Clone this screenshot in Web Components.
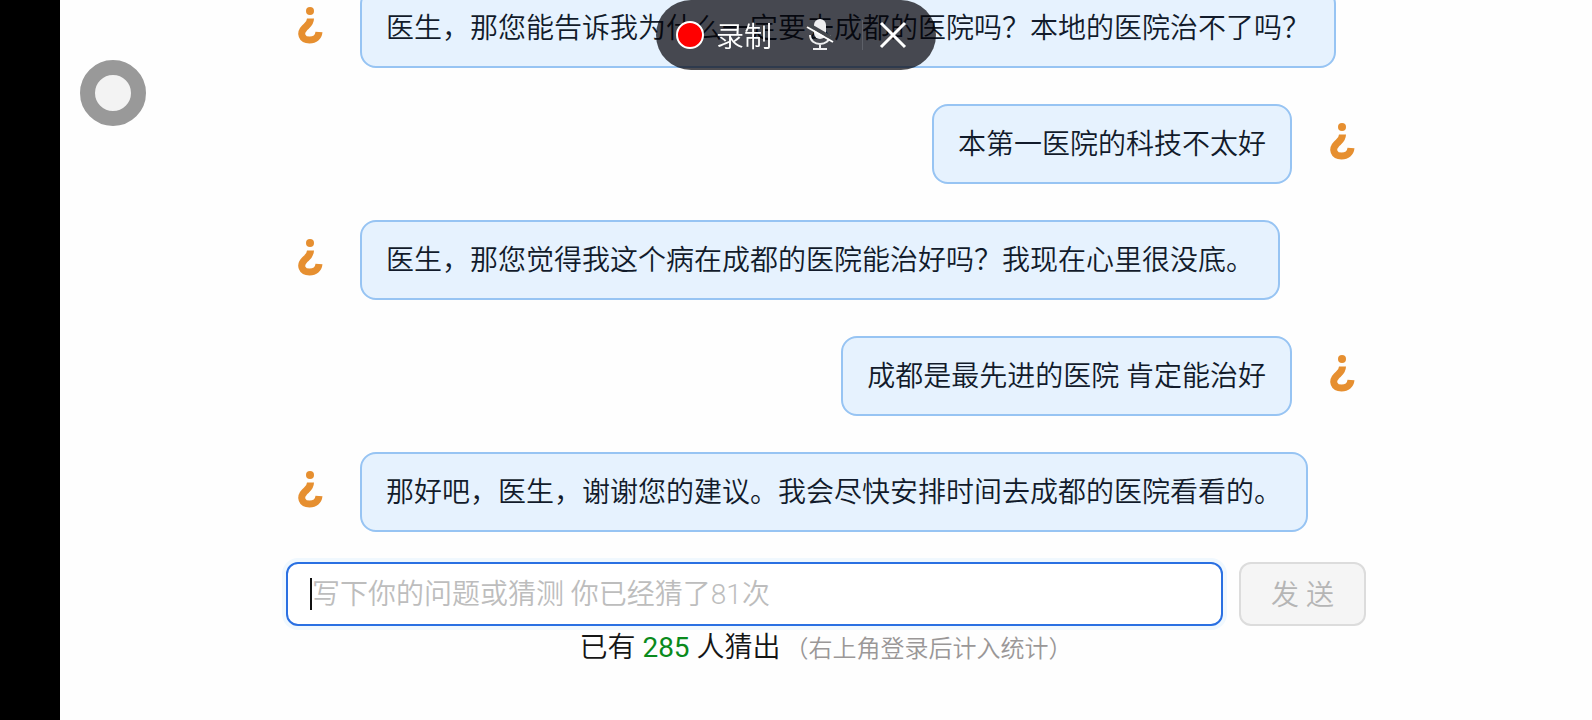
<!DOCTYPE html>
<html lang="zh-CN">
<head>
<meta charset="utf-8">
<meta name="viewport" content="width=device-width, initial-scale=1">
<title>聊天</title>
<style>
  body {
    margin: 0;
    background: #fefefe;
    font-family: Roboto, "Noto Sans CJK SC", sans-serif;
    font-size: 28px;
    font-weight: 350;
    color: #121b2b;
  }
</style>
</head>
<body>
<chat-page>
  <chat-message>医生，那您能告诉我为什么一定要去成都的医院吗？本地的医院治不了吗？</chat-message>
  <chat-message mine>本第一医院的科技不太好</chat-message>
  <chat-message>医生，那您觉得我这个病在成都的医院能治好吗？我现在心里很没底。</chat-message>
  <chat-message mine>成都是最先进的医院 肯定能治好</chat-message>
  <chat-message>那好吧，医生，谢谢您的建议。我会尽快安排时间去成都的医院看看的。</chat-message>
  <chat-composer slot="composer" placeholder="写下你的问题或猜测 你已经猜了81次"></chat-composer>
  <guess-stats slot="stats" count="285">右上角登录后计入统计</guess-stats>
</chat-page>
<assist-ball></assist-ball>
<record-bar></record-bar>

<script>
'use strict';

const attach = (host, html) => {
  const template = document.createElement('template');
  template.innerHTML = html;
  host.attachShadow({ mode: 'open' });
  host.shadowRoot.appendChild(template.content.cloneNode(true));
};

class ChatPage extends HTMLElement {
  constructor() {
    super();
    attach(this, `
      <style>
        :host {
          display: flex;
          box-sizing: border-box;
          height: 100vh;
          border-left: 60px solid #000;
        }

        main {
          display: flex;
          flex-direction: column;
          flex: 1;
          min-width: 0;
          max-width: 1080px;
          margin: 0 auto;
          padding-bottom: 49px;
        }

        /* newest message stays at the bottom, older ones run off the top */
        .list {
          display: flex;
          flex-direction: column;
          justify-content: flex-end;
          flex: 1;
          min-height: 0;
          gap: 36px;
          margin-bottom: 30px;
        }
      </style>

      <main>
        <div class="list"><slot></slot></div>
        <slot name="composer"></slot>
        <slot name="stats"></slot>
      </main>
    `);
  }
}

class ChatMessage extends HTMLElement {
  constructor() {
    super();
    attach(this, `
      <style>
        :host {
          display: flex;
          align-items: flex-start;
          gap: 26px;
        }

        :host([mine]) { flex-direction: row-reverse; }

        svg {
          flex: none;
          width: 48px;
          height: 48px;
          margin-top: 13px;
        }

        .bubble {
          padding: 17px 24px 15px;
          border: 2px solid #97c4f3;
          border-radius: 16px;
          background: #e6f2fe;
          line-height: 44px;
        }
      </style>

      <svg viewBox="0 0 48 48" aria-hidden="true">
        <circle cx="24" cy="10" r="4" fill="#e68f30"/>
        <path d="M24.500 17.500c0 5-3 6.500-6 9.500-5 5-3 12 5 12 5.500 0 9-3 9.500-8" fill="none" stroke="#e68f30" stroke-width="7"/>
      </svg>
      <div class="bubble"><slot></slot></div>
    `);
  }
}

class ChatComposer extends HTMLElement {
  constructor() {
    super();
    attach(this, `
      <style>
        :host { display: block; }

        form {
          display: flex;
          gap: 16px;
          margin: 0;
        }

        .field {
          position: relative;
          display: flex;
          flex: 1;
          min-width: 0;
        }

        /* text cursor of the focused field */
        .field::before {
          content: "";
          position: absolute;
          left: 24px;
          top: 16px;
          width: 2px;
          height: 32px;
          background: #111;
        }

        input, button {
          box-sizing: border-box;
          height: 64px;
          border-radius: 12px;
          font: inherit;
        }

        input {
          flex: 1;
          min-width: 0;
          padding: 0 24px;
          border: 2px solid #2a70e2;
          outline: none;
          background: #fff;
          box-shadow: 0 0 0 4px #f0f8fe;
          caret-color: transparent;
        }

        input::placeholder {
          color: #bdbdbd;
          opacity: 1;
        }

        button {
          width: 127px;
          padding: 0 0 3px;
          border: 2px solid #dcdcdc;
          background: #f5f5f5;
          color: #b5b5b5;
        }
      </style>

      <form>
        <div class="field">
          <input type="text" aria-label="问题或猜测" placeholder="${this.getAttribute('placeholder')}">
        </div>
        <button type="submit" disabled>发 送</button>
      </form>
    `);
  }
}

class GuessStats extends HTMLElement {
  constructor() {
    super();
    attach(this, `
      <style>
        :host {
          display: block;
          line-height: 44px;
          text-align: center;
          color: #151515;
        }

        b {
          font-weight: 400;
          color: #0a8a1c;
        }

        small {
          margin-left: 4px;
          font-size: 24px;
          color: #9a9797;
        }
      </style>

      已有 <b>${this.getAttribute('count')}</b> 人猜出<small>（<slot></slot>）</small>
    `);
  }
}

class AssistBall extends HTMLElement {
  constructor() {
    super();
    attach(this, `
      <style>
        :host {
          position: fixed;
          left: 80px;
          top: 60px;
          box-sizing: border-box;
          width: 66px;
          height: 66px;
          border: 15px solid #999;
          border-radius: 50%;
          background: #f3f3f3;
        }
      </style>
    `);
  }
}

class RecordBar extends HTMLElement {
  constructor() {
    super();
    attach(this, `
      <style>
        :host {
          position: fixed;
          top: 0;
          left: 50%;
          transform: translateX(-50%);
          display: flex;
          align-items: center;
          box-sizing: border-box;
          width: 280px;
          height: 70px;
          padding: 0 20px;
          border-radius: 35px;
          background: rgba(2, 0, 6, .7);
          color: #fff;
        }

        button {
          display: flex;
          align-items: center;
          padding: 0;
          border: 0;
          background: none;
          color: inherit;
          font: inherit;
        }

        .record { gap: 12px; }

        .dot {
          box-sizing: border-box;
          width: 28px;
          height: 28px;
          border: 2px solid #fff;
          border-radius: 50%;
          background: #f00;
        }

        .mic { margin-left: 32px; }

        .line {
          width: 1px;
          height: 30px;
          margin: 0 14px 0 26px;
          background: #5d6068;
        }
      </style>

      <button class="record" type="button"><span class="dot"></span>录制</button>
      <button class="mic" type="button" aria-label="麦克风">
        <svg width="32" height="36" viewBox="0 0 32 36">
          <rect x="10" y="2" width="12" height="20" rx="6" fill="#eeeef0"/>
          <path d="M6 18c0 12 20 12 20 0M16 27v5M9 32h14" fill="none" stroke="#eeeef0" stroke-width="2"/>
          <path d="M5 8l24 14" stroke="#44474d" stroke-width="4"/>
          <path d="M3 10l26 15" stroke="#fff" stroke-width="2"/>
        </svg>
      </button>
      <span class="line"></span>
      <button type="button" aria-label="关闭">
        <svg width="32" height="32" viewBox="0 0 32 32">
          <path d="M4 4l24 24M28 4L4 28" stroke="#fff" stroke-width="3"/>
        </svg>
      </button>
    `);
  }
}

customElements.define('chat-page', ChatPage);
customElements.define('chat-message', ChatMessage);
customElements.define('chat-composer', ChatComposer);
customElements.define('guess-stats', GuessStats);
customElements.define('assist-ball', AssistBall);
customElements.define('record-bar', RecordBar);
</script>
</body>
</html>
